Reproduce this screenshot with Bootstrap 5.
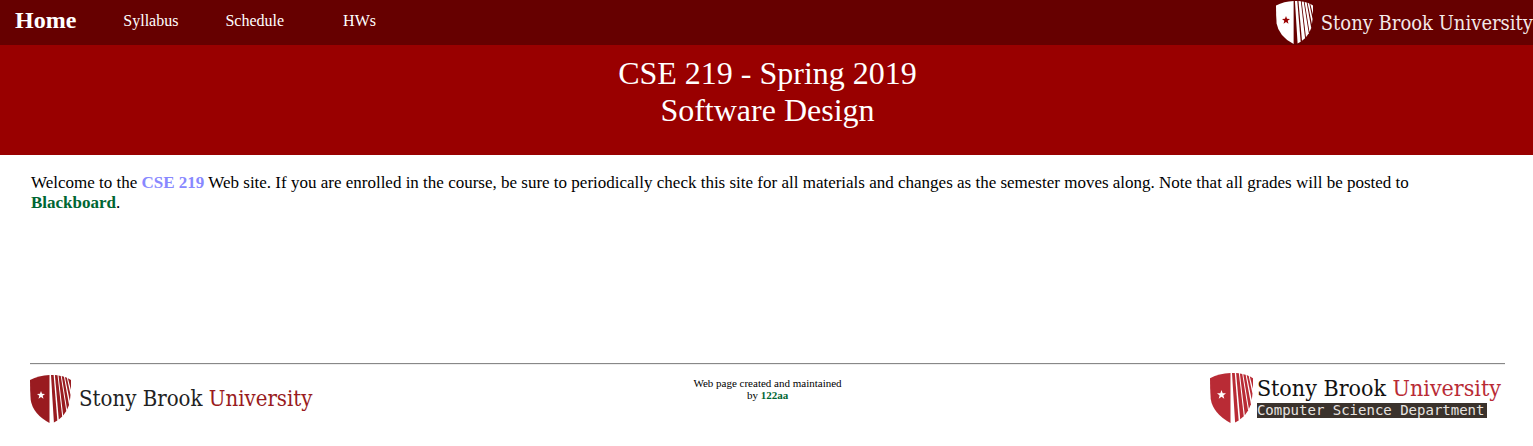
<!DOCTYPE html>
<html lang="en">
<head>
<meta charset="utf-8">
<meta name="viewport" content="width=device-width, initial-scale=1">
<title>CSE 219 - Home</title>
<link href="https://cdn.jsdelivr.net/npm/bootstrap@5.3.0/dist/css/bootstrap.min.css" rel="stylesheet">
<style>
  body { font-family: "Liberation Serif", "Times New Roman", serif; color: #000; line-height: 20px; }
  .topbar { background: #600; min-height: 45px; }
  .topbar a { color: #fff; font-size: 16px; line-height: 20px; }
  .topbar .home-link { font-size: 24px; }
  .menu-links { column-gap: 47px; padding: 0 0 3px 15px; }
  .menu-links li:last-child { margin-left: 12px; }
  .banner { background: #900; padding: 10px 0 26px 2px; }
  .banner h1 { font-size: 32px; line-height: 37px; font-weight: 400; }
  .page-body { margin: 0 28px 0 30px; }
  .intro { font-size: 17px; min-height: 208px; padding: 18px 24px 0 1px; }
  .intro .course { color: #88f; }
  .green { color: #063; }
  .rule { border-top: 1px solid #888; border-bottom: 1px solid #eee; opacity: 1; }
  .credit { font-size: 11px; line-height: 12px; padding-top: 4px; }
  .wordmark { font-family: "DejaVu Serif Condensed", "DejaVu Serif", serif; font-size: 22px; line-height: 30px; white-space: nowrap; color: #222; }
  .wordmark .univ { color: #991b20; }
  .wordmark.large { font-size: 23px; color: #111; }
  .wordmark.large .univ { color: #b92b35; }
  .topbar .wordmark { color: #f4e9e9; font-size: 20px; }
  .dept { background: #3a322c; color: #e8e4e0; font-family: "DejaVu Sans Mono", monospace; font-size: 14px; line-height: 15px; width: 230px; }
  .shield { flex: none; display: block; }
</style>
</head>
<body>
<svg class="d-none" aria-hidden="true">
  <symbol id="shield" viewBox="0 0 42 48" preserveAspectRatio="none">
    <path d="M0 5Q9 .5 20 0V48Q3 39 .7 25Q0 16 0 5Z"/>
    <path d="M21.500 0H24.200L28 45.500L24.500 47.500Z"/>
    <path d="M25.500 0.100L28.200 .3L33 41.500L29.500 44.500Z"/>
    <path d="M29.200 .5L31.500 .9L37.200 36L34 40.500Z"/>
    <path d="M32.500 1.100L34.800 1.700L40 30L38 34.500Z"/>
    <path d="M35.800 2L37.800 2.800L41.500 20L40.800 26Z"/>
    <path d="M38.800 3.200L42 5V15Z"/>
  </symbol>
  <symbol id="star" viewBox="0 0 10 10">
    <path d="M5 0L6.300 3.500L10 3.700L7.100 6L8.100 9.600L5 7.500L1.900 9.600L2.900 6L0 3.700L3.700 3.500Z"/>
  </symbol>
</svg>

<header>
  <nav class="topbar d-flex justify-content-between" aria-label="Main">
    <ul class="menu-links list-unstyled d-flex align-items-center mb-0">
      <li><a class="home-link fw-bold text-decoration-none" href="#">Home</a></li>
      <li><a class="text-decoration-none" href="#syllabus">Syllabus</a></li>
      <li><a class="text-decoration-none" href="#schedule">Schedule</a></li>
      <li><a class="text-decoration-none" href="#hws">HWs</a></li>
    </ul>
    <a class="wordmark d-flex align-items-center gap-2 text-decoration-none" href="#sbu">
      <svg class="shield" width="37" height="43" aria-hidden="true"><use href="#shield" fill="#fff" width="37" height="43"/><use href="#star" x="6" y="15" width="8" height="8" fill="#900"/></svg>
      <span>Stony Brook University</span>
    </a>
  </nav>
  <div class="banner text-center">
    <h1 class="mb-0 text-white">CSE 219 - Spring 2019<br>Software Design</h1>
  </div>
</header>

<div class="page-body">
  <main class="intro">
    <p class="mb-0">Welcome to the <b class="course">CSE 219</b> Web site. If you are enrolled in the course, be sure to periodically check this site for all materials and changes as the semester moves along. Note that all grades will be posted to <a class="green fw-bold text-decoration-none" href="#blackboard">Blackboard</a>.</p>
  </main>
  <hr class="rule m-0">
  <footer class="row g-0 pt-2">
    <div class="col d-flex align-items-end">
      <a class="wordmark d-flex align-items-center gap-2 text-decoration-none" href="#sbu">
        <svg class="shield" width="41" height="48" aria-hidden="true"><use href="#shield" fill="#991b20" width="41" height="48"/><use href="#star" x="7" y="16" width="8" height="8" fill="#fff"/></svg>
        <span>Stony Brook <span class="univ">University</span></span>
      </a>
    </div>
    <p class="credit col-auto text-center mb-0">Web page created and maintained<br>by <a class="green fw-bold text-decoration-none" href="#author">122aa</a></p>
    <div class="col d-flex justify-content-end">
      <a class="wordmark large d-flex gap-1 text-decoration-none pe-1" href="#cs">
        <svg class="shield" width="43" height="50" aria-hidden="true"><use href="#shield" fill="#b92b35" width="43" height="50"/><use href="#star" x="7" y="17" width="9" height="9" fill="#fff"/></svg>
        <span class="d-block"><span class="d-block">Stony Brook <span class="univ">University</span></span><span class="dept d-block">Computer Science Department</span></span>
      </a>
    </div>
  </footer>
</div>
<script src="https://cdn.jsdelivr.net/npm/bootstrap@5.3.0/dist/js/bootstrap.bundle.min.js"></script>
</body>
</html>
